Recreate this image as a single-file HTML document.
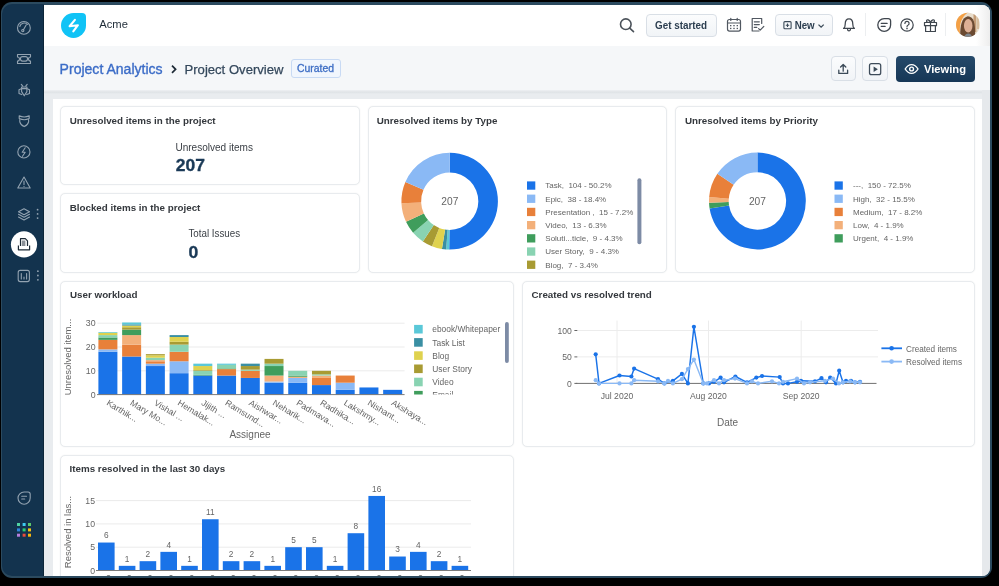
<!DOCTYPE html>
<html><head><meta charset="utf-8">
<style>
*{margin:0;padding:0;box-sizing:border-box}
html,body{width:999px;height:586px;overflow:hidden;background:#000;font-family:"Liberation Sans",sans-serif}
.a{position:absolute}
#frame{left:1px;top:2px;width:991px;height:576px;border-radius:11px;background:#2b4a5f}
#side{left:2px;top:4px;width:42px;height:572px;border-radius:10px 0 0 10px;background:#13334e}
#content{left:44px;top:5px;width:946px;height:571px;background:#e9ecef;border-radius:0 8px 8px 0;overflow:hidden}
#hdr{left:0;top:0;width:946px;height:41px;background:#fff}
#crumb{left:0;top:41px;width:946px;height:44px;background:#f5f7f9}
#shad{left:0;top:85px;width:946px;height:4px;background:linear-gradient(#eef0f3,#dfe3e6 55%,#e9ecef)}
#panel{left:9px;top:94px;width:929px;height:490px;background:#fff}
#sbar{left:938px;top:85px;width:8px;height:490px;background:#e6e9ec}
.card{position:absolute;background:#fff;border:1px solid #e8ebee;border-radius:5px;box-shadow:0 0 1.5px rgba(0,0,0,0.07)}
.btn{position:absolute;border:1px solid #d9dfe6;border-radius:4px;background:linear-gradient(#fbfcfd,#f1f4f7)}
svg text{font-family:"Liberation Sans",sans-serif}
</style></head>
<body>
<div id="frame" class="a"></div>
<div id="side" class="a"></div>
<div class="a" style="left:43px;top:5px;width:1px;height:571px;background:#0c2538"></div>
<div id="content" class="a">
  <div id="hdr" class="a"></div>
  <div id="crumb" class="a"></div>
  <div id="shad" class="a"></div>
  <div class="a" style="left:932px;top:0;width:14px;height:41px;background:linear-gradient(90deg,rgba(240,240,240,0),#ededed)"></div>
  <div id="panel" class="a"></div>
  <div id="sbar" class="a"></div>
</div>
<div class="a" style="left:0;top:0;width:999px;height:576px;overflow:hidden">
<!-- cards -->
<div class="card" style="left:60px;top:106px;width:300px;height:79px"></div>
<div class="card" style="left:60px;top:193px;width:300px;height:80px"></div>
<div class="card" style="left:368px;top:106px;width:299px;height:167px"></div>
<div class="card" style="left:675px;top:106px;width:300px;height:167px"></div>
<div class="card" style="left:60px;top:281px;width:454px;height:166px"></div>
<div class="card" style="left:522px;top:281px;width:453px;height:166px"></div>
<div class="card" style="left:60px;top:455px;width:454px;height:160px"></div>
<!-- header buttons -->
<div class="btn" style="left:646px;top:14px;width:71px;height:23px"></div>
<div class="btn" style="left:775px;top:14px;width:58px;height:22px"></div>
<div class="a" style="left:865px;top:13px;width:1px;height:23px;background:#eceef0"></div>
<div class="a" style="left:945px;top:13px;width:1px;height:23px;background:#eceef0"></div>
<div class="btn" style="left:831px;top:56px;width:25px;height:25px"></div>
<div class="btn" style="left:862px;top:56px;width:26px;height:25px"></div>
<div class="a" style="left:896px;top:56px;width:79px;height:26px;border-radius:4px;background:linear-gradient(#25496a,#163756)"></div>
<div class="a" style="left:291px;top:59px;width:50px;height:19px;border-radius:3px;border:1px solid #c8daf4;background:#f1f6fd"></div>
<!-- logo -->
<div class="a" style="left:61px;top:13px;width:25px;height:25px;background:#10c3f6;border-radius:50% 4px 50% 50%"></div>
<svg class="a" style="left:0;top:0;will-change:transform" width="999" height="586" viewBox="0 0 999 586">
<!-- sidebar icons -->
<g fill="none" stroke="#93a3b1" stroke-width="1.1" stroke-linecap="round" stroke-linejoin="round">
  <!-- gauge -->
  <circle cx="23.9" cy="27.9" r="6.4"/>
  <path d="M19.8,26.5 A4.5,4.5 0 0 1 27.5,24.5"/>
  <path d="M26.3,24.8 L23.3,30"/><circle cx="22.8" cy="30.6" r="1.1"/>
  <!-- ticket -->
  <path d="M17.5,54.5 h13 v2.5 a2,2 0 0 0 0,4 v2.5 h-13 v-2.5 a2,2 0 0 0 0,-4 z"/>
  <rect x="20.5" y="56.6" width="7" height="4.5" rx="2"/>
  <!-- bug -->
  <path d="M21.3,84.4 L22.8,86.2 M27.2,84.4 L25.7,86.2"/>
  <path d="M21.6,87 H26.9 V91.6 L24.25,95.8 L21.6,91.6 Z M21.6,88.6 H26.9"/>
  <path d="M21.2,88.8 L19,89.8 V93.4 L21.8,94.6 M27.3,88.8 L29.5,89.8 V93.4 L26.7,94.6"/>
  <!-- shield -->
  <path d="M19.2,115.8 Q24.2,118.2 29.2,115.8 V118.6 Q24.2,121 19.2,118.6 Z"/>
  <path d="M19.8,119.5 V121.8 Q20.5,124.8 24.2,126.6 Q27.9,124.8 28.6,121.8 V119.5"/>
  <!-- bolt circle -->
  <circle cx="23.9" cy="151.9" r="6.1"/>
  <path d="M25.2,147.8 l-3,4.5 h3 l-2.7,4"/>
  <!-- warning -->
  <path d="M24,177 L30.2,188 H17.8 Z"/>
  <path d="M24,181 v3.5 M24,186.2 v0.2"/>
  <!-- layers -->
  <path d="M24,208.8 l5.5,3 l-5.5,3 l-5.5,-3 z"/>
  <path d="M18.5,214.3 l5.5,3 l5.5,-3 M18.5,217 l5.5,3 l5.5,-3"/>
  <!-- chart -->
  <rect x="18.2" y="270.4" width="11.2" height="11.2" rx="2"/>
  <path d="M21.3,273.5 v5.5 M24,277 v2 M26.6,273.5 v5.5"/>
  <!-- chat -->
  <path d="M30.2,494.3 v3.8 a6.1,6.1 0 1 1 -6.1,-6.1 h3.9 a2.2,2.2 0 0 1 2.2,2.2 z"/>
  <path d="M21.7,496.3 h4.8 M21.7,499 h3"/>
</g>
<g fill="#93a3b1">
  <circle cx="37.6" cy="209.7" r="0.9"/><circle cx="37.6" cy="213.9" r="0.9"/><circle cx="37.6" cy="218.1" r="0.9"/>
  <circle cx="37.9" cy="271.2" r="0.9"/><circle cx="37.9" cy="275.5" r="0.9"/><circle cx="37.9" cy="279.8" r="0.9"/>
</g>
<circle cx="24" cy="244.4" r="13.1" fill="#fff"/>
<g fill="none" stroke="#1d2a36" stroke-width="1.2" stroke-linejoin="round">
  <path d="M20.5,246 v-7.3 h4.8 l2.2,2.2 v5.1"/>
  <path d="M18.4,245.5 v4.3 h11.2 v-4.3"/>
  <rect x="21.8" y="240.5" width="3.6" height="5.5" fill="#8a9097" stroke="none"/>
</g>
<g>
  <rect x="17" y="523" width="3" height="3" fill="#4fd3a2"/><rect x="22.6" y="523" width="3" height="3" fill="#3ecbf0"/><rect x="28" y="523" width="3" height="3" fill="#5cc96b"/>
  <rect x="17" y="528.4" width="3" height="3" fill="#2f86dc"/><rect x="22.6" y="528.4" width="3" height="3" fill="#2ecc71"/><rect x="28" y="528.4" width="3" height="3" fill="#f5c116"/>
  <rect x="17" y="533.7" width="3" height="3" fill="#b77fdc"/><rect x="22.6" y="533.7" width="3" height="3" fill="#e84b3c"/><rect x="28" y="533.7" width="3" height="3" fill="#f5b60f"/>
</g>
<!-- avatar -->
<clipPath id="av"><circle cx="968" cy="24.8" r="12"/></clipPath>
<g clip-path="url(#av)">
  <rect x="955" y="12" width="26" height="26" fill="#e8ddcc"/>
  <path d="M955,12 H969 C963,15 960.5,21 960,27 C959.5,31 960,35 961,38 H955 Z" fill="#f4a045"/>
  <rect x="973.5" y="13" width="2.8" height="19" fill="#c49c76"/>
  <rect x="977.2" y="15" width="1.6" height="14" fill="#d3b593"/>
  <path d="M960.3,38 C960,30 960.2,18 967.8,16.3 C974.8,16.6 975.3,25 975.1,38 Z" fill="#6b4a32"/>
  <ellipse cx="968.2" cy="25.8" rx="4.3" ry="6.8" fill="#ddb096"/>
  <path d="M964,38 C964.8,34.3 966.5,33.6 968.2,33.6 C970.2,33.6 971.6,34.6 972.2,38 Z" fill="#7f8891"/>
</g>
<!-- logo bolt -->
<polyline points="74.9,19.9 69.6,26.2 77.9,25.2 73.3,31.4" fill="none" stroke="#fff" stroke-width="2.1" stroke-linejoin="round" stroke-linecap="round"/>
<!-- header text -->
<text x="99.3" y="28.2" font-size="11.2" fill="#1d2a36">Acme</text>
<!-- search -->
<g fill="none" stroke="#4b525a" stroke-width="1.6" stroke-linecap="round">
  <circle cx="625.8" cy="24.2" r="5.3"/><path d="M629.7,28.1 L633.5,31.7"/>
</g>
<text x="681" y="28.5" font-size="10" font-weight="700" fill="#2c3e50" text-anchor="middle" textLength="52" lengthAdjust="spacingAndGlyphs">Get started</text>
<!-- calendar -->
<g fill="none" stroke="#515861" stroke-width="1.2" stroke-linecap="round">
  <rect x="727.5" y="19.5" width="13" height="11.6" rx="2"/>
  <path d="M727.5,23 h13 M730.8,18.3 v2.2 M737.2,18.3 v2.2"/>
</g>
<g fill="#515861"><rect x="730" y="25" width="1.4" height="1.3"/><rect x="733.3" y="25" width="1.4" height="1.3"/><rect x="736.6" y="25" width="1.4" height="1.3"/><rect x="730" y="27.8" width="1.4" height="1.3"/><rect x="733.3" y="27.8" width="1.4" height="1.3"/><rect x="736.6" y="27.8" width="1.4" height="1.3"/></g>
<!-- notes -->
<g fill="none" stroke="#515861" stroke-width="1.2" stroke-linecap="round" stroke-linejoin="round">
  <path d="M759,31 h-6.8 v-12.5 h9.5 v5"/>
  <path d="M754.3,21.8 h5 M754.3,24.6 h5 M754.3,27.4 h2.5"/>
  <path d="M758.6,28.6 l1.6,1.6 l3.6,-3.8"/>
</g>
<!-- new button -->
<g fill="none" stroke="#3b4a58" stroke-width="1.1">
  <rect x="783.9" y="21.6" width="7.2" height="7.2" rx="1"/>
  <path d="M787.5,23.5 v3.4 M785.8,25.2 h3.4"/>
  <path d="M818.5,24.6 l2.6,2.6 l2.6,-2.6" stroke-width="1.3"/>
</g>
<text x="794.7" y="29" font-size="10.2" font-weight="700" fill="#2c3e50" textLength="20" lengthAdjust="spacingAndGlyphs">New</text>
<!-- bell -->
<g fill="none" stroke="#3f464e" stroke-width="1.25" stroke-linecap="round" stroke-linejoin="round">
  <path d="M843.6,28.4 C845,27.6 845.2,26.5 845.2,24.2 C845.2,20.9 846.8,18.9 849,18.9 C851.2,18.9 852.8,20.9 852.8,24.2 C852.8,26.5 853,27.6 854.4,28.4 Z"/>
  <path d="M847.6,29.4 a1.4,1.4 0 0 0 2.8,0"/>
</g>
<!-- chat -->
<g fill="none" stroke="#3f464e" stroke-width="1.3" stroke-linecap="round">
  <path d="M890.6,21 v4 a6.4,6.4 0 1 1 -6.4,-6.4 h4.1 a2.3,2.3 0 0 1 2.3,2.3 z"/>
  <path d="M881.3,23.4 h5.8 M881.3,26.4 h3.8"/>
</g>
<!-- help -->
<g fill="none" stroke="#3f464e" stroke-width="1.2" stroke-linecap="round">
  <circle cx="907" cy="25" r="6.2"/>
  <path d="M904.9,23.4 a2.1,2.1 0 1 1 3,1.9 c-0.7,0.3 -0.9,0.8 -0.9,1.5"/>
</g>
<circle cx="907" cy="28.6" r="0.8" fill="#3f464e"/>
<!-- gift -->
<g fill="none" stroke="#3f464e" stroke-width="1.2" stroke-linejoin="round">
  <rect x="924.5" y="22.5" width="12" height="3.2"/>
  <path d="M925.6,25.7 v5.8 h9.8 v-5.8 M930.5,22.5 v9"/>
  <path d="M930.5,22.5 c-1,-3 -4,-3.5 -4,-1.5 c0,1 2,1.5 4,1.5 c1,-3 4,-3.5 4,-1.5 c0,1 -2,1.5 -4,1.5"/>
</g>
<!-- breadcrumb -->
<text x="59.6" y="74" font-size="14" fill="#3b6cc7" stroke="#3b6cc7" stroke-width="0.35" textLength="103" lengthAdjust="spacingAndGlyphs">Project Analytics</text>
<path d="M172,65.7 l3.6,3.6 l-3.6,3.6" fill="none" stroke="#1d2a36" stroke-width="1.7"/>
<text x="184.5" y="74" font-size="13.6" fill="#34485c" stroke="#34485c" stroke-width="0.25" textLength="99" lengthAdjust="spacingAndGlyphs">Project Overview</text>
<text x="297" y="72" font-size="10" fill="#3d6dc4" stroke="#3d6dc4" stroke-width="0.3" textLength="37" lengthAdjust="spacingAndGlyphs">Curated</text>
<!-- upload -->
<g fill="none" stroke="#3b4a58" stroke-width="1.3" stroke-linecap="round" stroke-linejoin="round">
  <path d="M843.2,71.2 v-6.6 M840.6,67 l2.6,-2.5 l2.6,2.5"/>
  <path d="M838.8,70.2 v3.2 h8.8 v-3.2"/>
</g>
<!-- play box -->
<g fill="none" stroke="#3d4b59" stroke-width="1.25" stroke-linejoin="round">
  <rect x="869.5" y="63.5" width="11.2" height="11.2" rx="2"/>
</g>
<path d="M873.6,66.6 v5.4 l4.3,-2.7 z" fill="#3b4a58"/>
<!-- eye -->
<g fill="none" stroke="#fff" stroke-width="1.4">
  <path d="M905.2,69 c1.8,-3 4,-4.4 6.4,-4.4 c2.4,0 4.6,1.4 6.4,4.4 c-1.8,3 -4,4.4 -6.4,4.4 c-2.4,0 -4.6,-1.4 -6.4,-4.4 z"/>
  <circle cx="911.6" cy="69" r="1.9"/>
</g>
<text x="924" y="73.4" font-size="11.6" font-weight="700" fill="#fff" textLength="42" lengthAdjust="spacingAndGlyphs">Viewing</text>
<!-- card titles -->
<g font-size="9.8" font-weight="700" fill="#34383d">
<text x="69.7" y="124">Unresolved items in the project</text>
<text x="69.7" y="211">Blocked items in the project</text>
<text x="376.7" y="124">Unresolved items by Type</text>
<text x="685" y="124">Unresolved items by Priority</text>
<text x="70" y="298.3">User workload</text>
<text x="531.5" y="298.3">Created vs resolved trend</text>
<text x="69.5" y="472">Items resolved in the last 30 days</text>
</g>
<text x="175.4" y="150.8" font-size="10.3" fill="#3a3f45" textLength="77.6" lengthAdjust="spacingAndGlyphs">Unresolved items</text>
<text x="175.8" y="171.3" font-size="17.2" font-weight="700" fill="#1b3a57" stroke="#1b3a57" stroke-width="0.35" textLength="29.2" lengthAdjust="spacingAndGlyphs">207</text>
<text x="188.4" y="237.2" font-size="10.2" fill="#3a3f45" textLength="51.8" lengthAdjust="spacingAndGlyphs">Total Issues</text>
<text x="188.6" y="258" font-size="17.2" font-weight="700" fill="#1b3a57" stroke="#1b3a57" stroke-width="0.35" textLength="9.8" lengthAdjust="spacingAndGlyphs">0</text>
<path d="M449.80,152.80A48.4,48.4 0 1 1 449.19,249.60L449.44,229.90A28.7,28.7 0 1 0 449.80,172.50Z" fill="#1a73e8"/>
<path d="M449.19,249.60A48.4,48.4 0 0 1 446.15,249.46L447.64,229.82A28.7,28.7 0 0 0 449.44,229.90Z" fill="#5ac8d8"/>
<path d="M446.15,249.46A48.4,48.4 0 0 1 441.93,248.96L445.13,229.52A28.7,28.7 0 0 0 447.64,229.82Z" fill="#3a8fa3"/>
<path d="M441.93,248.96A48.4,48.4 0 0 1 431.98,246.20L439.23,227.88A28.7,28.7 0 0 0 445.13,229.52Z" fill="#dfd24e"/>
<path d="M431.98,246.20A48.4,48.4 0 0 1 422.85,241.40L433.82,225.04A28.7,28.7 0 0 0 439.23,227.88Z" fill="#a89b33"/>
<path d="M422.85,241.40A48.4,48.4 0 0 1 413.10,232.75L428.04,219.91A28.7,28.7 0 0 0 433.82,225.04Z" fill="#89d3b2"/>
<path d="M413.10,232.75A48.4,48.4 0 0 1 406.01,221.81L423.83,213.42A28.7,28.7 0 0 0 428.04,219.91Z" fill="#3f9d5c"/>
<path d="M406.01,221.81A48.4,48.4 0 0 1 401.45,203.33L421.13,202.46A28.7,28.7 0 0 0 423.83,213.42Z" fill="#f3b07a"/>
<path d="M401.45,203.33A48.4,48.4 0 0 1 405.38,181.98L423.46,189.80A28.7,28.7 0 0 0 421.13,202.46Z" fill="#e8803a"/>
<path d="M405.38,181.98A48.4,48.4 0 0 1 449.80,152.80L449.80,172.50A28.7,28.7 0 0 0 423.46,189.80Z" fill="#8ab9f5"/>
<path d="M757.40,152.60A48.4,48.4 0 1 1 709.60,208.57L729.05,205.49A28.7,28.7 0 1 0 757.40,172.30Z" fill="#1a73e8"/>
<path d="M709.60,208.57A48.4,48.4 0 0 1 709.03,202.82L728.72,202.08A28.7,28.7 0 0 0 729.05,205.49Z" fill="#3f9d5c"/>
<path d="M709.03,202.82A48.4,48.4 0 0 1 709.16,197.05L728.80,198.66A28.7,28.7 0 0 0 728.72,202.08Z" fill="#f3b07a"/>
<path d="M709.16,197.05A48.4,48.4 0 0 1 717.37,173.80L733.66,184.87A28.7,28.7 0 0 0 728.80,198.66Z" fill="#e8803a"/>
<path d="M717.37,173.80A48.4,48.4 0 0 1 757.40,152.60L757.40,172.30A28.7,28.7 0 0 0 733.66,184.87Z" fill="#8ab9f5"/>
<text x="449.8" y="205.4" font-size="10.2" fill="#656565" font-weight="400" text-anchor="middle" >207</text>
<text x="757.4" y="205.4" font-size="10.2" fill="#656565" font-weight="400" text-anchor="middle" >207</text>
<rect x="527" y="181.4" width="8.3" height="8.3" fill="#1a73e8"/>
<text x="545.3" y="188.4" font-size="8.0" fill="#656565" font-weight="400" text-anchor="start" style="white-space:pre">Task,  104 - 50.2%</text>
<rect x="527" y="194.6" width="8.3" height="8.3" fill="#8ab9f5"/>
<text x="545.3" y="201.6" font-size="8.0" fill="#656565" font-weight="400" text-anchor="start" style="white-space:pre">Epic,  38 - 18.4%</text>
<rect x="527" y="207.8" width="8.3" height="8.3" fill="#e8803a"/>
<text x="545.3" y="214.8" font-size="8.0" fill="#656565" font-weight="400" text-anchor="start" style="white-space:pre">Presentation ,  15 - 7.2%</text>
<rect x="527" y="221.0" width="8.3" height="8.3" fill="#f3b07a"/>
<text x="545.3" y="228.0" font-size="8.0" fill="#656565" font-weight="400" text-anchor="start" style="white-space:pre">Video,  13 - 6.3%</text>
<rect x="527" y="234.2" width="8.3" height="8.3" fill="#3f9d5c"/>
<text x="545.3" y="241.2" font-size="8.0" fill="#656565" font-weight="400" text-anchor="start" style="white-space:pre">Soluti...ticle,  9 - 4.3%</text>
<rect x="527" y="247.4" width="8.3" height="8.3" fill="#89d3b2"/>
<text x="545.3" y="254.4" font-size="8.0" fill="#656565" font-weight="400" text-anchor="start" style="white-space:pre">User Story,  9 - 4.3%</text>
<rect x="527" y="260.6" width="8.3" height="8.3" fill="#a89b33"/>
<text x="545.3" y="267.6" font-size="8.0" fill="#656565" font-weight="400" text-anchor="start" style="white-space:pre">Blog,  7 - 3.4%</text>
<rect x="637.4" y="178.3" width="4" height="66" rx="2" fill="#7d8ba5"/>
<rect x="834.5" y="181.4" width="8.3" height="8.3" fill="#1a73e8"/>
<text x="853" y="188.4" font-size="8.0" fill="#656565" font-weight="400" text-anchor="start" style="white-space:pre">---,  150 - 72.5%</text>
<rect x="834.5" y="194.6" width="8.3" height="8.3" fill="#8ab9f5"/>
<text x="853" y="201.6" font-size="8.0" fill="#656565" font-weight="400" text-anchor="start" style="white-space:pre">High,  32 - 15.5%</text>
<rect x="834.5" y="207.8" width="8.3" height="8.3" fill="#e8803a"/>
<text x="853" y="214.8" font-size="8.0" fill="#656565" font-weight="400" text-anchor="start" style="white-space:pre">Medium,  17 - 8.2%</text>
<rect x="834.5" y="221.0" width="8.3" height="8.3" fill="#f3b07a"/>
<text x="853" y="228.0" font-size="8.0" fill="#656565" font-weight="400" text-anchor="start" style="white-space:pre">Low,  4 - 1.9%</text>
<rect x="834.5" y="234.2" width="8.3" height="8.3" fill="#3f9d5c"/>
<text x="853" y="241.2" font-size="8.0" fill="#656565" font-weight="400" text-anchor="start" style="white-space:pre">Urgent,  4 - 1.9%</text>
<line x1="97.4" y1="370.8" x2="404.6" y2="370.8" stroke="#ebebeb" stroke-width="1"/>
<line x1="97.4" y1="347.0" x2="404.6" y2="347.0" stroke="#ebebeb" stroke-width="1"/>
<line x1="97.4" y1="323.2" x2="404.6" y2="323.2" stroke="#ebebeb" stroke-width="1"/>
<text x="95.6" y="397.7" font-size="8.8" fill="#656565" font-weight="400" text-anchor="end" >0</text>
<text x="95.6" y="373.9" font-size="8.8" fill="#656565" font-weight="400" text-anchor="end" >10</text>
<text x="95.6" y="350.1" font-size="8.8" fill="#656565" font-weight="400" text-anchor="end" >20</text>
<text x="95.6" y="326.3" font-size="8.8" fill="#656565" font-weight="400" text-anchor="end" >30</text>
<rect x="98.40" y="351.76" width="19" height="42.84" fill="#1a73e8"/>
<rect x="98.40" y="349.38" width="19" height="2.38" fill="#8ab9f5"/>
<rect x="98.40" y="339.86" width="19" height="9.52" fill="#e8803a"/>
<rect x="98.40" y="337.48" width="19" height="2.38" fill="#3f9d5c"/>
<rect x="98.40" y="335.10" width="19" height="2.38" fill="#89d3b2"/>
<rect x="98.40" y="332.72" width="19" height="2.38" fill="#dfd24e"/>
<rect x="98.40" y="332.01" width="19" height="0.71" fill="#5ac8d8"/>
<text x="105.9" y="404.5" font-size="8.7" fill="#656565" transform="rotate(31 105.9 404.5)">Karthik...</text>
<rect x="122.13" y="356.52" width="19" height="38.08" fill="#1a73e8"/>
<rect x="122.13" y="344.62" width="19" height="11.90" fill="#e8803a"/>
<rect x="122.13" y="335.10" width="19" height="9.52" fill="#f3b07a"/>
<rect x="122.13" y="329.63" width="19" height="5.47" fill="#3f9d5c"/>
<rect x="122.13" y="327.25" width="19" height="2.38" fill="#a89b33"/>
<rect x="122.13" y="325.58" width="19" height="1.67" fill="#dfd24e"/>
<rect x="122.13" y="324.39" width="19" height="1.19" fill="#3a8fa3"/>
<rect x="122.13" y="322.49" width="19" height="1.90" fill="#5ac8d8"/>
<text x="129.6" y="404.5" font-size="8.7" fill="#656565" transform="rotate(31 129.6 404.5)">Mary Mo...</text>
<rect x="145.86" y="366.04" width="19" height="28.56" fill="#1a73e8"/>
<rect x="145.86" y="363.66" width="19" height="2.38" fill="#8ab9f5"/>
<rect x="145.86" y="361.28" width="19" height="2.38" fill="#e8803a"/>
<rect x="145.86" y="360.09" width="19" height="1.19" fill="#f3b07a"/>
<rect x="145.86" y="357.71" width="19" height="2.38" fill="#89d3b2"/>
<rect x="145.86" y="355.33" width="19" height="2.38" fill="#dfd24e"/>
<rect x="145.86" y="354.14" width="19" height="1.19" fill="#a89b33"/>
<text x="153.4" y="404.5" font-size="8.7" fill="#656565" transform="rotate(31 153.4 404.5)">Vishal ...</text>
<rect x="169.59" y="373.18" width="19" height="21.42" fill="#1a73e8"/>
<rect x="169.59" y="361.28" width="19" height="11.90" fill="#8ab9f5"/>
<rect x="169.59" y="351.76" width="19" height="9.52" fill="#e8803a"/>
<rect x="169.59" y="344.62" width="19" height="7.14" fill="#89d3b2"/>
<rect x="169.59" y="341.76" width="19" height="2.86" fill="#a89b33"/>
<rect x="169.59" y="337.00" width="19" height="4.76" fill="#dfd24e"/>
<rect x="169.59" y="335.10" width="19" height="1.90" fill="#3a8fa3"/>
<text x="177.1" y="404.5" font-size="8.7" fill="#656565" transform="rotate(31 177.1 404.5)">Hemalak...</text>
<rect x="193.32" y="375.56" width="19" height="19.04" fill="#1a73e8"/>
<rect x="193.32" y="374.85" width="19" height="0.71" fill="#3f9d5c"/>
<rect x="193.32" y="370.80" width="19" height="4.05" fill="#89d3b2"/>
<rect x="193.32" y="370.09" width="19" height="0.71" fill="#a89b33"/>
<rect x="193.32" y="366.04" width="19" height="4.05" fill="#dfd24e"/>
<rect x="193.32" y="363.66" width="19" height="2.38" fill="#5ac8d8"/>
<text x="200.8" y="404.5" font-size="8.7" fill="#656565" transform="rotate(31 200.8 404.5)">Jijith ...</text>
<rect x="217.05" y="375.56" width="19" height="19.04" fill="#1a73e8"/>
<rect x="217.05" y="369.13" width="19" height="6.43" fill="#e8803a"/>
<rect x="217.05" y="368.42" width="19" height="0.71" fill="#3f9d5c"/>
<rect x="217.05" y="364.85" width="19" height="3.57" fill="#89d3b2"/>
<rect x="217.05" y="363.66" width="19" height="1.19" fill="#5ac8d8"/>
<text x="224.6" y="404.5" font-size="8.7" fill="#656565" transform="rotate(31 224.6 404.5)">Ramsund...</text>
<rect x="240.78" y="377.94" width="19" height="16.66" fill="#1a73e8"/>
<rect x="240.78" y="370.80" width="19" height="7.14" fill="#e8803a"/>
<rect x="240.78" y="369.61" width="19" height="1.19" fill="#89d3b2"/>
<rect x="240.78" y="366.04" width="19" height="3.57" fill="#a89b33"/>
<rect x="240.78" y="363.66" width="19" height="2.38" fill="#3a8fa3"/>
<text x="248.3" y="404.5" font-size="8.7" fill="#656565" transform="rotate(31 248.3 404.5)">Aishwar...</text>
<rect x="264.51" y="382.70" width="19" height="11.90" fill="#1a73e8"/>
<rect x="264.51" y="381.51" width="19" height="1.19" fill="#8ab9f5"/>
<rect x="264.51" y="375.56" width="19" height="5.95" fill="#f3b07a"/>
<rect x="264.51" y="366.04" width="19" height="9.52" fill="#3f9d5c"/>
<rect x="264.51" y="363.66" width="19" height="2.38" fill="#89d3b2"/>
<rect x="264.51" y="358.90" width="19" height="4.76" fill="#a89b33"/>
<text x="272.0" y="404.5" font-size="8.7" fill="#656565" transform="rotate(31 272.0 404.5)">Neharik...</text>
<rect x="288.24" y="382.70" width="19" height="11.90" fill="#1a73e8"/>
<rect x="288.24" y="377.94" width="19" height="4.76" fill="#8ab9f5"/>
<rect x="288.24" y="376.75" width="19" height="1.19" fill="#f3b07a"/>
<rect x="288.24" y="375.56" width="19" height="1.19" fill="#3f9d5c"/>
<rect x="288.24" y="370.80" width="19" height="4.76" fill="#89d3b2"/>
<text x="295.7" y="404.5" font-size="8.7" fill="#656565" transform="rotate(31 295.7 404.5)">Padmava...</text>
<rect x="311.97" y="385.08" width="19" height="9.52" fill="#1a73e8"/>
<rect x="311.97" y="377.94" width="19" height="7.14" fill="#e8803a"/>
<rect x="311.97" y="375.56" width="19" height="2.38" fill="#f3b07a"/>
<rect x="311.97" y="374.37" width="19" height="1.19" fill="#89d3b2"/>
<rect x="311.97" y="370.80" width="19" height="3.57" fill="#a89b33"/>
<text x="319.5" y="404.5" font-size="8.7" fill="#656565" transform="rotate(31 319.5 404.5)">Radhika...</text>
<rect x="335.70" y="389.84" width="19" height="4.76" fill="#1a73e8"/>
<rect x="335.70" y="382.70" width="19" height="7.14" fill="#8ab9f5"/>
<rect x="335.70" y="375.56" width="19" height="7.14" fill="#e8803a"/>
<text x="343.2" y="404.5" font-size="8.7" fill="#656565" transform="rotate(31 343.2 404.5)">Lakshmy...</text>
<rect x="359.43" y="387.46" width="19" height="7.14" fill="#1a73e8"/>
<text x="366.9" y="404.5" font-size="8.7" fill="#656565" transform="rotate(31 366.9 404.5)">Nishant...</text>
<rect x="383.16" y="389.84" width="19" height="4.76" fill="#1a73e8"/>
<text x="390.7" y="404.5" font-size="8.7" fill="#656565" transform="rotate(31 390.7 404.5)">Akshaya...</text>
<line x1="97" y1="394.6" x2="404.6" y2="394.6" stroke="#7a7a7a" stroke-width="1"/>
<text x="0" y="0" font-size="9.5" fill="#656565" font-weight="400" text-anchor="middle" transform="translate(70.5 357) rotate(-90)">Unresolved item...</text>
<text x="250" y="437.9" font-size="10" fill="#656565" font-weight="400" text-anchor="middle" >Assignee</text>
<clipPath id="wl"><rect x="405" y="318" width="100" height="76.5"/></clipPath><g clip-path="url(#wl)">
<rect x="414.1" y="324.9" width="8.6" height="8.6" fill="#5ac8d8"/>
<text x="432.3" y="332.4" font-size="8.4" fill="#656565" font-weight="400" text-anchor="start" >ebook/Whitepaper</text>
<rect x="414.1" y="338.1" width="8.6" height="8.6" fill="#3a8fa3"/>
<text x="432.3" y="345.6" font-size="8.4" fill="#656565" font-weight="400" text-anchor="start" >Task List</text>
<rect x="414.1" y="351.3" width="8.6" height="8.6" fill="#dfd24e"/>
<text x="432.3" y="358.8" font-size="8.4" fill="#656565" font-weight="400" text-anchor="start" >Blog</text>
<rect x="414.1" y="364.5" width="8.6" height="8.6" fill="#a89b33"/>
<text x="432.3" y="372.0" font-size="8.4" fill="#656565" font-weight="400" text-anchor="start" >User Story</text>
<rect x="414.1" y="377.7" width="8.6" height="8.6" fill="#89d3b2"/>
<text x="432.3" y="385.2" font-size="8.4" fill="#656565" font-weight="400" text-anchor="start" >Video</text>
<rect x="414.1" y="390.9" width="8.6" height="8.6" fill="#3f9d5c"/>
<text x="432.3" y="398.4" font-size="8.4" fill="#656565" font-weight="400" text-anchor="start" >Email</text>
</g>
<rect x="505" y="322" width="3.8" height="41" rx="1.9" fill="#7d8ba5"/>
<line x1="577" y1="356.9" x2="878" y2="356.9" stroke="#ececec" stroke-width="1"/>
<line x1="577" y1="330.5" x2="878" y2="330.5" stroke="#ececec" stroke-width="1"/>
<line x1="617" y1="320.6" x2="617" y2="383.4" stroke="#ececec" stroke-width="1"/>
<line x1="708.5" y1="320.6" x2="708.5" y2="383.4" stroke="#ececec" stroke-width="1"/>
<line x1="801.2" y1="320.6" x2="801.2" y2="383.4" stroke="#ececec" stroke-width="1"/>
<text x="571.8" y="386.5" font-size="8.6" fill="#656565" font-weight="400" text-anchor="end" >0</text>
<line x1="574.4" y1="383.4" x2="577.3" y2="383.4" stroke="#666" stroke-width="1"/>
<text x="571.8" y="360.1" font-size="8.6" fill="#656565" font-weight="400" text-anchor="end" >50</text>
<line x1="574.4" y1="356.9" x2="577.3" y2="356.9" stroke="#666" stroke-width="1"/>
<text x="571.8" y="333.6" font-size="8.6" fill="#656565" font-weight="400" text-anchor="end" >100</text>
<line x1="574.4" y1="330.5" x2="577.3" y2="330.5" stroke="#666" stroke-width="1"/>
<line x1="576" y1="383.4" x2="876.5" y2="383.4" stroke="#6f6f6f" stroke-width="1"/>
<text x="617" y="398.6" font-size="8.6" fill="#656565" font-weight="400" text-anchor="middle" >Jul 2020</text>
<text x="708.5" y="398.6" font-size="8.6" fill="#656565" font-weight="400" text-anchor="middle" >Aug 2020</text>
<text x="801.2" y="398.6" font-size="8.6" fill="#656565" font-weight="400" text-anchor="middle" >Sep 2020</text>
<text x="727.5" y="426" font-size="10" fill="#656565" font-weight="400" text-anchor="middle" >Date</text>
<polyline points="595.7,354.3 599.0,383.4 619.5,375.5 631.4,376.5 634.1,368.6 658.0,379.2 664.4,383.4 672.9,380.8 681.9,373.9 687.9,383.4 693.9,326.8 703.3,383.4 709.0,383.4 714.0,381.8 720.6,377.6 724.0,382.3 735.4,376.5 747.0,382.3 756.3,377.6 762.0,376.0 779.7,377.1 783.0,383.4 788.0,383.4 797.0,381.8 801.0,380.8 815.0,381.3 821.5,378.1 826.0,382.3 830.2,377.6 836.0,383.4 839.2,370.7 843.0,382.3 846.0,380.8 851.0,380.8 855.0,382.3 860.0,381.8" fill="none" stroke="#1a73e8" stroke-width="1.45" stroke-linejoin="round"/>
<circle cx="595.7" cy="354.3" r="2.1" fill="#1a73e8"/>
<circle cx="599.0" cy="383.4" r="2.1" fill="#1a73e8"/>
<circle cx="619.5" cy="375.5" r="2.1" fill="#1a73e8"/>
<circle cx="631.4" cy="376.5" r="2.1" fill="#1a73e8"/>
<circle cx="634.1" cy="368.6" r="2.1" fill="#1a73e8"/>
<circle cx="658.0" cy="379.2" r="2.1" fill="#1a73e8"/>
<circle cx="664.4" cy="383.4" r="2.1" fill="#1a73e8"/>
<circle cx="672.9" cy="380.8" r="2.1" fill="#1a73e8"/>
<circle cx="681.9" cy="373.9" r="2.1" fill="#1a73e8"/>
<circle cx="687.9" cy="383.4" r="2.1" fill="#1a73e8"/>
<circle cx="693.9" cy="326.8" r="2.1" fill="#1a73e8"/>
<circle cx="703.3" cy="383.4" r="2.1" fill="#1a73e8"/>
<circle cx="709.0" cy="383.4" r="2.1" fill="#1a73e8"/>
<circle cx="714.0" cy="381.8" r="2.1" fill="#1a73e8"/>
<circle cx="720.6" cy="377.6" r="2.1" fill="#1a73e8"/>
<circle cx="724.0" cy="382.3" r="2.1" fill="#1a73e8"/>
<circle cx="735.4" cy="376.5" r="2.1" fill="#1a73e8"/>
<circle cx="747.0" cy="382.3" r="2.1" fill="#1a73e8"/>
<circle cx="756.3" cy="377.6" r="2.1" fill="#1a73e8"/>
<circle cx="762.0" cy="376.0" r="2.1" fill="#1a73e8"/>
<circle cx="779.7" cy="377.1" r="2.1" fill="#1a73e8"/>
<circle cx="783.0" cy="383.4" r="2.1" fill="#1a73e8"/>
<circle cx="788.0" cy="383.4" r="2.1" fill="#1a73e8"/>
<circle cx="797.0" cy="381.8" r="2.1" fill="#1a73e8"/>
<circle cx="801.0" cy="380.8" r="2.1" fill="#1a73e8"/>
<circle cx="815.0" cy="381.3" r="2.1" fill="#1a73e8"/>
<circle cx="821.5" cy="378.1" r="2.1" fill="#1a73e8"/>
<circle cx="826.0" cy="382.3" r="2.1" fill="#1a73e8"/>
<circle cx="830.2" cy="377.6" r="2.1" fill="#1a73e8"/>
<circle cx="836.0" cy="383.4" r="2.1" fill="#1a73e8"/>
<circle cx="839.2" cy="370.7" r="2.1" fill="#1a73e8"/>
<circle cx="843.0" cy="382.3" r="2.1" fill="#1a73e8"/>
<circle cx="846.0" cy="380.8" r="2.1" fill="#1a73e8"/>
<circle cx="851.0" cy="380.8" r="2.1" fill="#1a73e8"/>
<circle cx="855.0" cy="382.3" r="2.1" fill="#1a73e8"/>
<circle cx="860.0" cy="381.8" r="2.1" fill="#1a73e8"/>
<polyline points="595.7,380.2 599.0,383.4 619.5,383.4 631.4,383.4 634.1,380.2 658.0,381.3 664.4,383.4 668.0,380.8 672.9,383.4 681.9,379.2 687.9,369.1 693.9,359.6 703.3,383.4 707.0,383.4 714.0,380.2 719.0,383.4 724.0,380.2 735.0,378.6 747.0,383.4 752.0,381.3 758.0,383.4 772.0,381.3 779.0,383.4 783.0,381.8 797.0,378.6 804.0,383.4 810.0,382.3 825.0,380.8 833.0,378.6 839.0,383.4 843.0,382.3 850.0,381.3 855.0,382.3 860.0,382.3" fill="none" stroke="#8ab9f5" stroke-width="1.4" stroke-linejoin="round"/>
<circle cx="595.7" cy="380.2" r="2.1" fill="#8ab9f5"/>
<circle cx="599.0" cy="383.4" r="2.1" fill="#8ab9f5"/>
<circle cx="619.5" cy="383.4" r="2.1" fill="#8ab9f5"/>
<circle cx="631.4" cy="383.4" r="2.1" fill="#8ab9f5"/>
<circle cx="634.1" cy="380.2" r="2.1" fill="#8ab9f5"/>
<circle cx="658.0" cy="381.3" r="2.1" fill="#8ab9f5"/>
<circle cx="664.4" cy="383.4" r="2.1" fill="#8ab9f5"/>
<circle cx="668.0" cy="380.8" r="2.1" fill="#8ab9f5"/>
<circle cx="672.9" cy="383.4" r="2.1" fill="#8ab9f5"/>
<circle cx="681.9" cy="379.2" r="2.1" fill="#8ab9f5"/>
<circle cx="687.9" cy="369.1" r="2.1" fill="#8ab9f5"/>
<circle cx="693.9" cy="359.6" r="2.1" fill="#8ab9f5"/>
<circle cx="703.3" cy="383.4" r="2.1" fill="#8ab9f5"/>
<circle cx="707.0" cy="383.4" r="2.1" fill="#8ab9f5"/>
<circle cx="714.0" cy="380.2" r="2.1" fill="#8ab9f5"/>
<circle cx="719.0" cy="383.4" r="2.1" fill="#8ab9f5"/>
<circle cx="724.0" cy="380.2" r="2.1" fill="#8ab9f5"/>
<circle cx="735.0" cy="378.6" r="2.1" fill="#8ab9f5"/>
<circle cx="747.0" cy="383.4" r="2.1" fill="#8ab9f5"/>
<circle cx="752.0" cy="381.3" r="2.1" fill="#8ab9f5"/>
<circle cx="758.0" cy="383.4" r="2.1" fill="#8ab9f5"/>
<circle cx="772.0" cy="381.3" r="2.1" fill="#8ab9f5"/>
<circle cx="779.0" cy="383.4" r="2.1" fill="#8ab9f5"/>
<circle cx="783.0" cy="381.8" r="2.1" fill="#8ab9f5"/>
<circle cx="797.0" cy="378.6" r="2.1" fill="#8ab9f5"/>
<circle cx="804.0" cy="383.4" r="2.1" fill="#8ab9f5"/>
<circle cx="810.0" cy="382.3" r="2.1" fill="#8ab9f5"/>
<circle cx="825.0" cy="380.8" r="2.1" fill="#8ab9f5"/>
<circle cx="833.0" cy="378.6" r="2.1" fill="#8ab9f5"/>
<circle cx="839.0" cy="383.4" r="2.1" fill="#8ab9f5"/>
<circle cx="843.0" cy="382.3" r="2.1" fill="#8ab9f5"/>
<circle cx="850.0" cy="381.3" r="2.1" fill="#8ab9f5"/>
<circle cx="855.0" cy="382.3" r="2.1" fill="#8ab9f5"/>
<circle cx="860.0" cy="382.3" r="2.1" fill="#8ab9f5"/>
<line x1="881.4" y1="348.3" x2="902" y2="348.3" stroke="#1a73e8" stroke-width="1.8"/><circle cx="891.6" cy="348.3" r="2.3" fill="#1a73e8"/>
<line x1="881.4" y1="361.6" x2="902" y2="361.6" stroke="#8ab9f5" stroke-width="1.8"/><circle cx="891.6" cy="361.6" r="2.3" fill="#8ab9f5"/>
<text x="906" y="351.5" font-size="8.2" fill="#656565" font-weight="400" text-anchor="start" >Created items</text>
<text x="906" y="364.8" font-size="8.2" fill="#656565" font-weight="400" text-anchor="start" >Resolved items</text>
<line x1="96" y1="547.2" x2="471" y2="547.2" stroke="#ebebeb" stroke-width="1"/>
<line x1="96" y1="523.9" x2="471" y2="523.9" stroke="#ebebeb" stroke-width="1"/>
<line x1="96" y1="500.6" x2="471" y2="500.6" stroke="#ebebeb" stroke-width="1"/>
<text x="95" y="573.6" font-size="8.7" fill="#656565" font-weight="400" text-anchor="end" >0</text>
<text x="95" y="550.3" font-size="8.7" fill="#656565" font-weight="400" text-anchor="end" >5</text>
<text x="95" y="527.0" font-size="8.7" fill="#656565" font-weight="400" text-anchor="end" >10</text>
<text x="95" y="503.7" font-size="8.7" fill="#656565" font-weight="400" text-anchor="end" >15</text>
<rect x="98.00" y="542.54" width="16.6" height="27.96" fill="#1a73e8"/>
<text x="106.3" y="538.2" font-size="8.3" fill="#656565" font-weight="400" text-anchor="middle" >6</text>
<text x="108.5" y="581" font-size="9" fill="#656565" text-anchor="middle">0</text>
<rect x="118.80" y="565.84" width="16.6" height="4.66" fill="#1a73e8"/>
<text x="127.1" y="561.5" font-size="8.3" fill="#656565" font-weight="400" text-anchor="middle" >1</text>
<text x="129.3" y="581" font-size="9" fill="#656565" text-anchor="middle">0</text>
<rect x="139.60" y="561.18" width="16.6" height="9.32" fill="#1a73e8"/>
<text x="147.9" y="556.9" font-size="8.3" fill="#656565" font-weight="400" text-anchor="middle" >2</text>
<text x="150.1" y="581" font-size="9" fill="#656565" text-anchor="middle">0</text>
<rect x="160.40" y="551.86" width="16.6" height="18.64" fill="#1a73e8"/>
<text x="168.7" y="547.6" font-size="8.3" fill="#656565" font-weight="400" text-anchor="middle" >4</text>
<text x="170.9" y="581" font-size="9" fill="#656565" text-anchor="middle">0</text>
<rect x="181.20" y="565.84" width="16.6" height="4.66" fill="#1a73e8"/>
<text x="189.5" y="561.5" font-size="8.3" fill="#656565" font-weight="400" text-anchor="middle" >1</text>
<text x="191.7" y="581" font-size="9" fill="#656565" text-anchor="middle">0</text>
<rect x="202.00" y="519.24" width="16.6" height="51.26" fill="#1a73e8"/>
<text x="210.3" y="514.9" font-size="8.3" fill="#656565" font-weight="400" text-anchor="middle" >11</text>
<text x="212.5" y="581" font-size="9" fill="#656565" text-anchor="middle">0</text>
<rect x="222.80" y="561.18" width="16.6" height="9.32" fill="#1a73e8"/>
<text x="231.1" y="556.9" font-size="8.3" fill="#656565" font-weight="400" text-anchor="middle" >2</text>
<text x="233.3" y="581" font-size="9" fill="#656565" text-anchor="middle">0</text>
<rect x="243.60" y="561.18" width="16.6" height="9.32" fill="#1a73e8"/>
<text x="251.9" y="556.9" font-size="8.3" fill="#656565" font-weight="400" text-anchor="middle" >2</text>
<text x="254.1" y="581" font-size="9" fill="#656565" text-anchor="middle">0</text>
<rect x="264.40" y="565.84" width="16.6" height="4.66" fill="#1a73e8"/>
<text x="272.7" y="561.5" font-size="8.3" fill="#656565" font-weight="400" text-anchor="middle" >1</text>
<text x="274.9" y="581" font-size="9" fill="#656565" text-anchor="middle">0</text>
<rect x="285.20" y="547.20" width="16.6" height="23.30" fill="#1a73e8"/>
<text x="293.5" y="542.9" font-size="8.3" fill="#656565" font-weight="400" text-anchor="middle" >5</text>
<text x="295.7" y="581" font-size="9" fill="#656565" text-anchor="middle">0</text>
<rect x="306.00" y="547.20" width="16.6" height="23.30" fill="#1a73e8"/>
<text x="314.3" y="542.9" font-size="8.3" fill="#656565" font-weight="400" text-anchor="middle" >5</text>
<text x="316.5" y="581" font-size="9" fill="#656565" text-anchor="middle">0</text>
<rect x="326.80" y="565.84" width="16.6" height="4.66" fill="#1a73e8"/>
<text x="335.1" y="561.5" font-size="8.3" fill="#656565" font-weight="400" text-anchor="middle" >1</text>
<text x="337.3" y="581" font-size="9" fill="#656565" text-anchor="middle">0</text>
<rect x="347.60" y="533.22" width="16.6" height="37.28" fill="#1a73e8"/>
<text x="355.9" y="528.9" font-size="8.3" fill="#656565" font-weight="400" text-anchor="middle" >8</text>
<text x="358.1" y="581" font-size="9" fill="#656565" text-anchor="middle">0</text>
<rect x="368.40" y="495.94" width="16.6" height="74.56" fill="#1a73e8"/>
<text x="376.7" y="491.6" font-size="8.3" fill="#656565" font-weight="400" text-anchor="middle" >16</text>
<text x="378.9" y="581" font-size="9" fill="#656565" text-anchor="middle">0</text>
<rect x="389.20" y="556.52" width="16.6" height="13.98" fill="#1a73e8"/>
<text x="397.5" y="552.2" font-size="8.3" fill="#656565" font-weight="400" text-anchor="middle" >3</text>
<text x="399.7" y="581" font-size="9" fill="#656565" text-anchor="middle">0</text>
<rect x="410.00" y="551.86" width="16.6" height="18.64" fill="#1a73e8"/>
<text x="418.3" y="547.6" font-size="8.3" fill="#656565" font-weight="400" text-anchor="middle" >4</text>
<text x="420.5" y="581" font-size="9" fill="#656565" text-anchor="middle">0</text>
<rect x="430.80" y="561.18" width="16.6" height="9.32" fill="#1a73e8"/>
<text x="439.1" y="556.9" font-size="8.3" fill="#656565" font-weight="400" text-anchor="middle" >2</text>
<text x="441.3" y="581" font-size="9" fill="#656565" text-anchor="middle">0</text>
<rect x="451.60" y="565.84" width="16.6" height="4.66" fill="#1a73e8"/>
<text x="459.9" y="561.5" font-size="8.3" fill="#656565" font-weight="400" text-anchor="middle" >1</text>
<text x="462.1" y="581" font-size="9" fill="#656565" text-anchor="middle">0</text>
<line x1="96" y1="570.5" x2="471" y2="570.5" stroke="#7a7a7a" stroke-width="1"/>
<text x="0" y="0" font-size="9.5" fill="#656565" font-weight="400" text-anchor="middle" transform="translate(70.5 532) rotate(-90)">Resolved in las...</text>
</svg>
</div>
</body></html>
